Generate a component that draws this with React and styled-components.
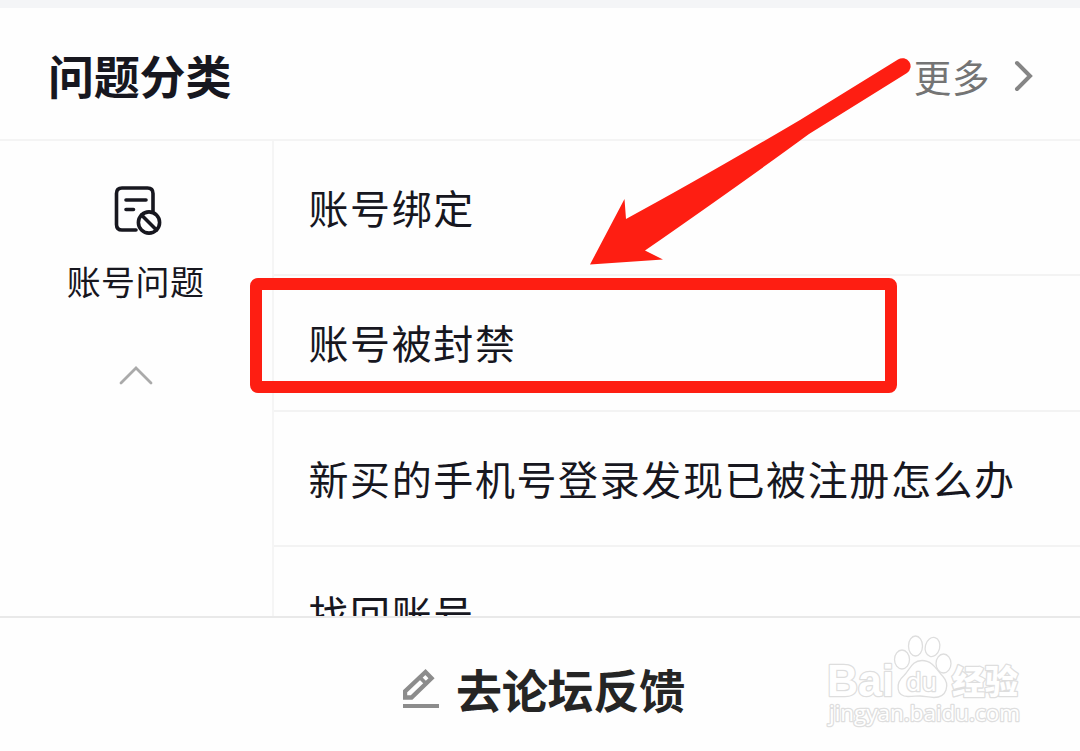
import React from 'react'
import styled, { createGlobalStyle } from 'styled-components'

const GlobalStyle = createGlobalStyle`
  * {
    box-sizing: border-box;
  }
  body {
    margin: 0;
    background-color: #fefefe;
    font-family: 'Noto Sans CJK SC', sans-serif;
  }
`

const Page = styled.div`
  position: relative;
  display: flex;
  flex-direction: column;
  width: 1080px;
  height: 751px;
  overflow: hidden;
  border-top: 8px solid #f4f5f7;
  color: #17171f;
`

const Header = styled.header`
  display: flex;
  flex: none;
  align-items: center;
  justify-content: space-between;
  height: 133px;
  padding: 2px 46px 0 48px;
  border-bottom: 2px solid #f4f4f4;
`

const Title = styled.h1`
  margin: 0 0 2px;
  font-size: 46px;
  font-weight: 700;
  line-height: 60px;
  letter-spacing: -0.2px;
`

const More = styled.a`
  display: flex;
  align-items: center;
  gap: 24px;
  padding-top: 2px;
  color: #747474;
  font-size: 37.5px;
  line-height: 50px;
  letter-spacing: 0.6px;
`

const Body = styled.main`
  display: flex;
  flex: none;
  height: 475px;
  overflow: hidden;
`

const Sidebar = styled.nav`
  display: flex;
  flex: none;
  flex-direction: column;
  align-items: center;
  width: 274px;
  padding-top: 45px;
  padding-right: 1px;
  border-right: 2px solid #f5f5f5;

  > svg:first-child {
    margin-left: 4px;
  }
`

const Category = styled.div`
  margin: 21px 0 60px;
  font-size: 34px;
  line-height: 48px;
  letter-spacing: 0.4px;
`

const List = styled.ul`
  flex: 1;
  margin: 0;
  padding: 0;
  list-style: none;
`

const Row = styled.li`
  height: 135.4px;
  padding: 36px 0 0 34.5px;
  border-bottom: 2px solid #f3f3f3;
  font-size: 40px;
  line-height: 60px;
  letter-spacing: 1.6px;
  white-space: nowrap;
`

const Footer = styled.footer`
  display: flex;
  flex: 1;
  align-items: center;
  justify-content: center;
  gap: 17px;
  padding: 7px 0 0 8px;
  border-top: 2px solid #e9e9e9;
  background-color: #fefefe;
  color: #252525;
  font-size: 46px;
  font-weight: 700;
  line-height: 60px;
  letter-spacing: -0.2px;
`

const Highlight = styled.div`
  position: absolute;
  top: 270px;
  left: 250px;
  width: 647px;
  height: 115px;
  border: 12px solid #fe1e12;
  border-radius: 8px;
`

const Arrow = styled.svg`
  position: absolute;
  top: 42px;
  left: 580px;
`

const Watermark = styled.svg`
  position: absolute;
  top: 622px;
  left: 820px;
  fill: #fff;
  stroke: #dedede;
  stroke-width: 1.3;
  stroke-linejoin: round;

  text {
    paint-order: stroke;
    stroke-width: 2.6;
  }
`

const rows = [
  '账号绑定',
  '账号被封禁',
  '新买的手机号登录发现已被注册怎么办',
  '找回账号',
]

const ChevronRight = () => (
  <svg width="20" height="32" viewBox="0 0 20 32" fill="none">
    <path
      d="M3 3l13 13L3 29"
      stroke="#858585"
      strokeWidth="4"
      strokeLinecap="round"
    />
  </svg>
)

const ChevronUp = () => (
  <svg width="34" height="20" viewBox="0 0 34 20" fill="none">
    <path
      d="M2 18L17 3l15 15"
      stroke="#aaa"
      strokeWidth="2.8"
      strokeLinecap="round"
    />
  </svg>
)

const BlockedDocument = () => (
  <svg
    width="48"
    height="50"
    viewBox="0 0 48 50"
    fill="none"
    stroke="#17171f"
    strokeWidth="3.6"
    strokeLinecap="round"
  >
    <path d="M22 44H8q-5.500 0-5.500-5.500V7.500q0-5.500 5.500-5.500h25.500q5.500 0 5.500 5.500v18" />
    <path d="M12 14h20M12 23.500h7.500" />
    <circle cx="35" cy="36.500" r="10.600" />
    <path d="M27.500 29l15 15" />
  </svg>
)

const Pencil = () => (
  <svg width="36" height="40" viewBox="0 0 36 40" fill="none" stroke="#8c8c8c">
    <path d="M2 29.500v-6L22.500 4l6 6.300L8.500 29.500z" strokeWidth="4.400" />
    <path d="M16.500 9l7.500 7.500" strokeWidth="3.800" />
    <path d="M0 38h36" strokeWidth="3.800" />
  </svg>
)

export default class App extends React.Component {
  render() {
    return (
      <Page>
        <GlobalStyle />
        <Header>
          <Title>问题分类</Title>
          <More>
            更多
            <ChevronRight />
          </More>
        </Header>
        <Body>
          <Sidebar>
            <BlockedDocument />
            <Category>账号问题</Category>
            <ChevronUp />
          </Sidebar>
          <List>
            {rows.map(row => (
              <Row key={row}>{row}</Row>
            ))}
          </List>
        </Body>
        <Footer>
          <Pencil />
          去论坛反馈
        </Footer>
        <Highlight />
        <Arrow width="340" height="220" viewBox="580 50 340 220">
          <path
            d="M590 264.500L624.500 199l1.500 20Q700 179 800 120L898 59.500a8 8 0 0 1 9 13.500L809 134Q745 181 645 250.500l18 9z"
            fill="#fe1e12"
          />
        </Arrow>
        <Watermark width="220" height="110" viewBox="820 630 220 110">
          <text
            x="827"
            y="695.500"
            fontFamily="Liberation Sans"
            fontSize="45"
            fontWeight="700"
            textLength="67"
            lengthAdjust="spacingAndGlyphs"
          >
            Bai
          </text>
          <ellipse cx="902" cy="659.500" rx="7.500" ry="9.500" />
          <ellipse cx="915.500" cy="646" rx="7" ry="10" />
          <ellipse
            cx="932.500"
            cy="647"
            rx="7.200"
            ry="9.700"
            transform="rotate(15 932.5 647)"
          />
          <ellipse cx="943.500" cy="663.500" rx="7.500" ry="9.500" />
          <path d="M922 660.500c-10 0-12 9-18 15-9 8-8 21 4 21 6 0 8-.5 12-.5s9 1.500 14 1.500c13 0 16-13 9-21-6-6-10-16-21-16z" />
          <text
            x="906"
            y="691"
            fontFamily="DejaVu Sans"
            fontSize="25"
            textLength="31"
            lengthAdjust="spacingAndGlyphs"
          >
            du
          </text>
          <text
            x="952"
            y="693.500"
            fontFamily="Noto Sans CJK SC"
            fontSize="33"
            fontWeight="900"
          >
            经验
          </text>
          <text
            x="829"
            y="721"
            fontFamily="Open Sans"
            fontSize="22.500"
            textLength="191"
            lengthAdjust="spacingAndGlyphs"
          >
            jingyan.baidu.com
          </text>
        </Watermark>
      </Page>
    )
  }
}
